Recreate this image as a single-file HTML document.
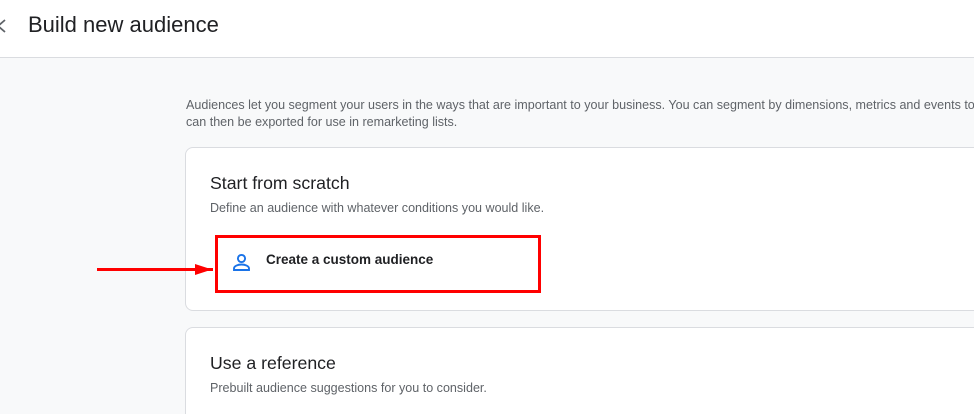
<!DOCTYPE html>
<html><head><style>
html,body{margin:0;width:974px;height:414px;overflow:hidden}
body{background:#f8f9fa;font-family:"Liberation Sans",Arial,sans-serif;position:relative}
.hdr{position:absolute;left:0;top:0;width:974px;height:57px;background:#fff;border-bottom:1px solid #dadce0}
.t{position:absolute;white-space:nowrap}
.card{position:absolute;left:185px;width:780px;background:#fff;border:1px solid #dadce0;border-radius:8px}
</style></head><body>
<div class="hdr">
<svg style="position:absolute;left:-4px;top:19px" width="12" height="14" viewBox="0 0 12 14"><path d="M9 1L2 7l7 6" stroke="#5f6368" stroke-width="1.8" fill="none"/></svg>
<div class="t" style="left:28px;top:12px;font-size:22px;color:#202124">Build new audience</div>
</div>
<div class="t" style="left:186px;top:97px;font-size:12.55px;color:#5f6368;line-height:17px;width:788px;overflow:hidden">Audiences let you segment your users in the ways that are important to your business. You can segment by dimensions, metrics and events to<br>can then be exported for use in remarketing lists.</div>
<div class="card" style="top:147px;height:162px;width:800px"></div>
<div class="card" style="top:327px;height:86px;width:800px;border-bottom:none;border-radius:8px 8px 0 0"></div>
<div class="t" style="left:210px;top:173px;font-size:17.7px;color:#202124">Start from scratch</div>
<div class="t" style="left:210px;top:201px;font-size:12.55px;color:#5f6368">Define an audience with whatever conditions you would like.</div>
<div class="t" style="left:210px;top:353px;font-size:17.7px;color:#202124">Use a reference</div>
<div class="t" style="left:210px;top:381px;font-size:12.55px;color:#5f6368">Prebuilt audience suggestions for you to consider.</div>
<div style="position:absolute;left:215px;top:235px;width:320px;height:52px;border:3.5px solid #f00"></div>
<svg style="position:absolute;left:232px;top:253px" width="19" height="19" viewBox="0 0 19 19"><circle cx="9.5" cy="5.5" r="3.6" stroke="#1a73e8" stroke-width="1.9" fill="none"/><path d="M2 17v-1.5c0-2.5 4-4 7.5-4s7.5 1.5 7.5 4V17z" stroke="#1a73e8" stroke-width="1.9" fill="none"/></svg>
<div class="t" style="left:266px;top:252px;font-size:13.5px;font-weight:bold;color:#202124">Create a custom audience</div>
<svg style="position:absolute;left:95px;top:262px" width="118" height="15"><path d="M2 7.5H195" stroke="#f00" stroke-width="3"/><path d="M100 2L117 7.5L100 13z" fill="#f00"/></svg>
</body></html>
